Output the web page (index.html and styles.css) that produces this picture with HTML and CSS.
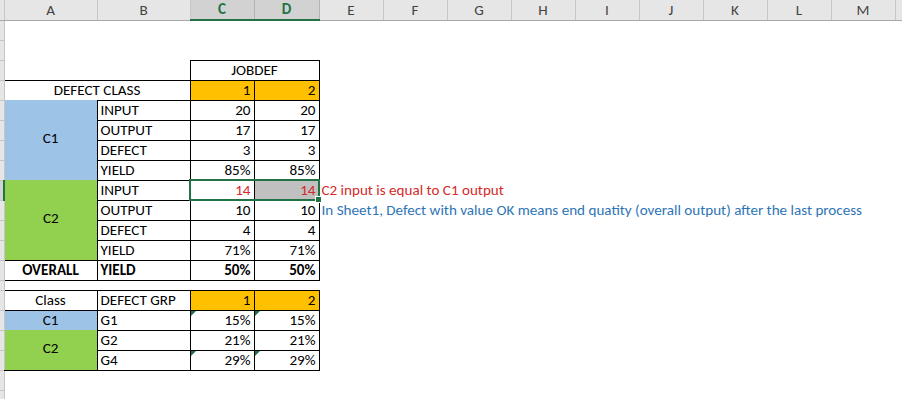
FILE: index.html
```html
<!DOCTYPE html>
<html>
<head>
<meta charset="utf-8">
<title>Sheet</title>
<link rel="stylesheet" href="styles.css">
</head>
<body>
<table class="sheet">
  <colgroup>
    <col class="c-rh"><col class="c-a"><col class="c-b"><col class="c-c"><col class="c-d">
    <col class="c-x" span="9"><col class="c-n">
  </colgroup>
  <thead>
    <tr class="hdr">
      <th class="rh"></th><th>A</th><th>B</th><th class="sel">C</th><th class="sel">D</th>
      <th>E</th><th>F</th><th>G</th><th>H</th><th>I</th><th>J</th><th>K</th><th>L</th><th>M</th><th class="last"></th>
    </tr>
  </thead>
  <tbody>
    <tr><td class="rh"></td><td colspan="14"></td></tr>
    <tr><td class="rh"></td><td colspan="14"></td></tr>
    <tr>
      <td class="rh"></td><td></td><td></td>
      <td colspan="2" class="bx ctr">JOBDEF</td><td colspan="10"></td>
    </tr>
    <tr>
      <td class="rh"></td><td colspan="2" class="ctr btop">DEFECT CLASS</td>
      <td class="bx num org">1</td><td class="bx num org">2</td><td colspan="10"></td>
    </tr>
    <tr>
      <td class="rh"></td><td rowspan="4" class="ctr mid blue">C1</td>
      <td class="bx">INPUT</td><td class="bx num">20</td><td class="bx num">20</td><td colspan="10"></td>
    </tr>
    <tr>
      <td class="rh"></td>
      <td class="bx">OUTPUT</td><td class="bx num">17</td><td class="bx num">17</td><td colspan="10"></td>
    </tr>
    <tr>
      <td class="rh"></td>
      <td class="bx">DEFECT</td><td class="bx num">3</td><td class="bx num">3</td><td colspan="10"></td>
    </tr>
    <tr>
      <td class="rh"></td>
      <td class="bx">YIELD</td><td class="bx num">85%</td><td class="bx num">85%</td><td colspan="10"></td>
    </tr>
    <tr>
      <td class="rh rhsel"></td><td rowspan="4" class="ctr mid green">C2</td>
      <td class="bx">INPUT</td>
      <td class="bx num red active">14<div class="selbox"></div></td>
      <td class="bx num red selfill">14</td>
      <td colspan="9" class="note red">C2 input is equal to C1 output</td><td></td>
    </tr>
    <tr>
      <td class="rh"></td>
      <td class="bx">OUTPUT</td><td class="bx num">10</td><td class="bx num">10</td>
      <td colspan="9" class="note blue-t">In Sheet1, Defect with value OK means end quatity (overall output) after the last process</td><td></td>
    </tr>
    <tr>
      <td class="rh"></td>
      <td class="bx">DEFECT</td><td class="bx num">4</td><td class="bx num">4</td><td colspan="10"></td>
    </tr>
    <tr>
      <td class="rh"></td>
      <td class="bx">YIELD</td><td class="bx num">71%</td><td class="bx num">71%</td><td colspan="10"></td>
    </tr>
    <tr class="bold">
      <td class="rh"></td><td class="ctr btb">OVERALL</td>
      <td class="bx">YIELD</td><td class="bx num">50%</td><td class="bx num">50%</td><td colspan="10"></td>
    </tr>
    <tr class="short"><td class="rh"></td><td colspan="14"></td></tr>
    <tr>
      <td class="rh"></td><td class="ctr btb">Class</td>
      <td class="bx">DEFECT GRP</td><td class="bx num org">1</td><td class="bx num org">2</td><td colspan="10"></td>
    </tr>
    <tr>
      <td class="rh"></td><td class="ctr blue">C1</td>
      <td class="bx">G1</td><td class="bx num tri">15%</td><td class="bx num tri">15%</td><td colspan="10"></td>
    </tr>
    <tr>
      <td class="rh"></td><td rowspan="2" class="ctr mid green bbot">C2</td>
      <td class="bx">G2</td><td class="bx num">21%</td><td class="bx num">21%</td><td colspan="10"></td>
    </tr>
    <tr>
      <td class="rh"></td>
      <td class="bx">G4</td><td class="bx num tri">29%</td><td class="bx num tri">29%</td><td colspan="10"></td>
    </tr>
    <tr><td class="rh"></td><td colspan="14"></td></tr>
    <tr><td class="rh"></td><td colspan="14"></td></tr>
  </tbody>
</table>
</body>
</html>
```

FILE: styles.css
```css
html, body {
  margin: 0;
  padding: 0;
  background: #fff;
}
body {
  font-family: Carlito, Calibri, "Liberation Sans Narrow", "Liberation Sans", sans-serif;
  font-size: 15.1px;
  color: #000;
  overflow: hidden;
  height: 399px;
}
.sheet {
  border-collapse: collapse;
  table-layout: fixed;
  width: 902px;
}
.c-rh { width: 4px; }
.c-a { width: 93px; }
.c-b { width: 93px; }
.c-c { width: 64px; }
.c-d { width: 65px; }
.c-x { width: 64px; }
.c-n { width: 7px; }

tr { height: 20px; }
tr.short { height: 10px; }

td, th {
  padding: 0 3px 1px 3px;
  line-height: 17px;
  vertical-align: bottom;
  white-space: nowrap;
  overflow: hidden;
  text-align: left;
}

/* column header */
.hdr th {
  background: #e6e6e6;
  color: #444;
  font-weight: normal;
  text-align: center;
  border-right: 1px solid #c6c6c6;
  border-bottom: 1px solid #a8a8a8;
  padding: 0 0 1px 0;
}
.hdr th.sel {
  background: #d2d2d2;
  color: #217346;
  font-weight: bold;
  border-bottom: 2px solid #217346;
  border-right-color: #b4b4b4;
}
.hdr th.last { border-right: none; }
.hdr th.rh { border-right: 1px solid #c6c6c6; }

/* row header strip */
td.rh {
  background: #e6e6e6;
  border-bottom: 1px solid #c6c6c6;
  border-right: 1px solid #c6c6c6;
  padding: 0;
}
td.rhsel {
  background: #d2d2d2;
  border-right: 2px solid #217346;
}

.bx { border: 1px solid #000; }
.btop { border-top: 1px solid #000; }
.btb { border-top: 1px solid #000; border-bottom: 1px solid #000; }
.bbot { border-bottom: 1px solid #000; }

.ctr { text-align: center; }
.mid { vertical-align: middle; padding-bottom: 3px; }
.num { text-align: right; }
.bold td { font-weight: bold; }

.org { background: #ffc000; }
.blue { background: #9dc3e6; }
.green { background: #92d050; }

.red { color: #d42a2a; }
.blue-t { color: #2e75b6; }
.note { padding-left: 2px; overflow: visible; }

.selfill { background: #c0c0c0; }

.active {
  position: relative;
  overflow: visible;
}
.selbox {
  position: absolute;
  left: -2px;
  top: -2px;
  width: 131px;
  height: 22px;
  box-sizing: border-box;
  border: 2px solid #217346;
  pointer-events: none;
}
.selbox::after {
  content: "";
  position: absolute;
  right: -4px;
  bottom: -4px;
  width: 5px;
  height: 5px;
  background: #217346;
  border: 1px solid #fff;
}

.tri { position: relative; }
.tri::before {
  content: "";
  position: absolute;
  left: 0;
  top: 0;
  border-top: 5px solid #1e7145;
  border-right: 5px solid transparent;
}
```
